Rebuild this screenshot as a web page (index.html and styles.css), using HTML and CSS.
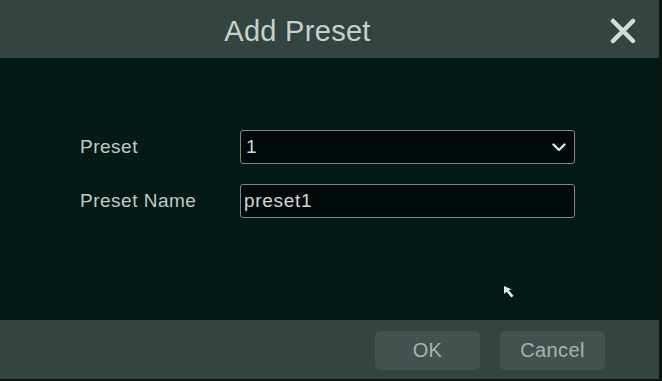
FILE: index.html
```html
<!DOCTYPE html>
<html lang="en">
<head>
    <meta charset="UTF-8">
    <title>Add Preset</title>
    <link rel="stylesheet" href="styles.css">
</head>
<body>
    <div class="dialog">
        <div class="dialog-header">
            <h2>Add Preset</h2>
            <span class="close-btn">
                <svg width="26" height="26" viewBox="0 0 26 26">
                    <path d="M3 3 L23 23 M23 3 L3 23" stroke="#d4dbd8" stroke-width="4.5" stroke-linecap="round"/>
                </svg>
            </span>
        </div>
        <div class="dialog-body">
            <form class="preset-form">
                <div class="row">
                    <label for="preset">Preset</label>
                    <div class="select-box" id="preset">
                        <span>1</span>
                        <svg width="14" height="9" viewBox="0 0 14 9">
                            <path d="M1.5 1.5 L7 7 L12.5 1.5" stroke="#e2e7e5" stroke-width="2.4" fill="none" stroke-linecap="round" stroke-linejoin="round"/>
                        </svg>
                    </div>
                </div>
                <div class="row">
                    <label for="presetName">Preset Name</label>
                    <input type="text" id="presetName" value="preset1">
                </div>
            </form>
            <svg class="cursor" width="14" height="14" viewBox="0 0 14 14">
                <path d="M1 1 L1 9 L3.5 6.8 L8.5 12.5 L10.5 10.8 L5.5 5 L9 4.5 Z" fill="#e6ecea"/>
            </svg>
        </div>
        <div class="dialog-footer">
            <button type="button">OK</button>
            <button type="button">Cancel</button>
        </div>
    </div>
</body>
</html>
```

FILE: styles.css
```css
body { margin: 0; background: #0b1412; font-family: "Liberation Sans", Arial, sans-serif; }
.dialog { width: 659px; height: 379px; display: flex; flex-direction: column; background: #031a17; border-right: 3px solid #0e1614; border-bottom: 2px solid #0e1614; }
.dialog-header { height: 58px; background: #344441; display: flex; align-items: center; justify-content: center; position: relative; }
.dialog-header h2 { margin: 4px 0 0 -64px; font-weight: normal; font-size: 29px; letter-spacing: 0.3px; color: #c9d0cd; }
.close-btn { position: absolute; right: 23px; top: 18px; width: 26px; height: 26px; }
.dialog-body { flex: 1; position: relative; }
.preset-form { padding: 72px 0 0 80px; display: flex; flex-direction: column; gap: 20px; }
.row { display: flex; align-items: center; }
label { width: 160px; font-size: 19px; letter-spacing: 0.5px; color: #c3c9c7; }
.select-box, input { box-sizing: border-box; width: 335px; height: 34px; background: #02090a; border: 1px solid #7e8886; border-radius: 3px; color: #d3d8d6; font-family: inherit; font-size: 19px; letter-spacing: 0.7px; }
.select-box { display: flex; align-items: center; justify-content: space-between; padding: 0 8px 0 5px; }
input { padding: 0 3px; outline: none; }
.cursor { position: absolute; left: 503px; top: 227px; }
.dialog-footer { height: 59px; background: #344441; display: flex; justify-content: flex-end; align-items: center; gap: 20px; padding-right: 54px; }
button { width: 105px; height: 39px; margin-top: 2px; background: #43524f; border: none; border-radius: 5px; color: #a8b2af; font-family: inherit; font-size: 20px; letter-spacing: 0.4px; cursor: pointer; }
```
